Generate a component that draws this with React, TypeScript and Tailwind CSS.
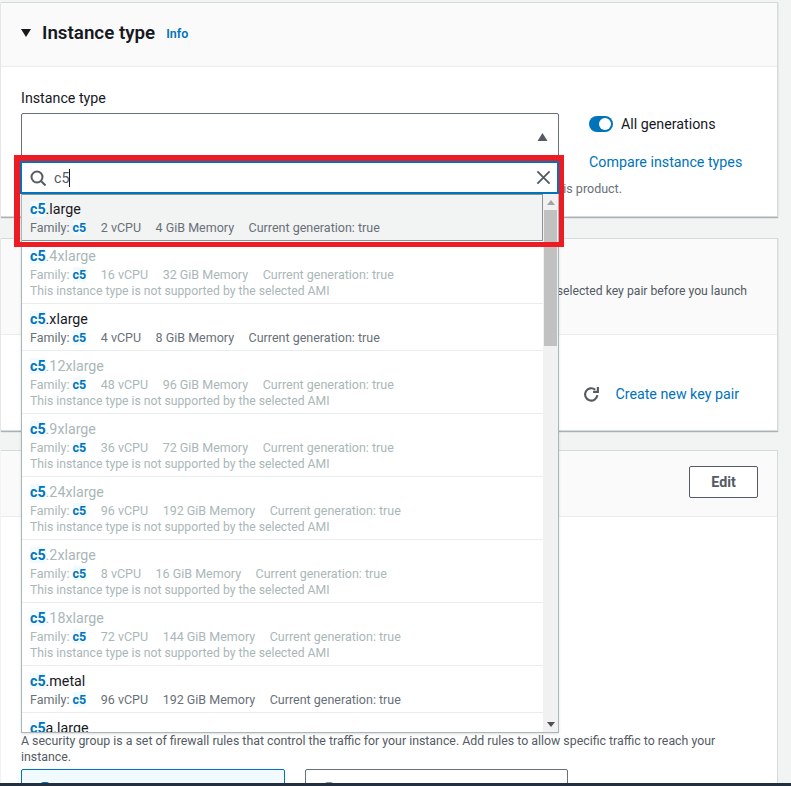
import React from "react";

type Row = {
  name: string;
  vcpu: string;
  memory: string;
  disabled?: boolean;
};

const rows: Row[] = [
  { name: ".large", vcpu: "2 vCPU", memory: "4 GiB Memory" },
  { name: ".4xlarge", vcpu: "16 vCPU", memory: "32 GiB Memory", disabled: true },
  { name: ".xlarge", vcpu: "4 vCPU", memory: "8 GiB Memory" },
  { name: ".12xlarge", vcpu: "48 vCPU", memory: "96 GiB Memory", disabled: true },
  { name: ".9xlarge", vcpu: "36 vCPU", memory: "72 GiB Memory", disabled: true },
  { name: ".24xlarge", vcpu: "96 vCPU", memory: "192 GiB Memory", disabled: true },
  { name: ".2xlarge", vcpu: "8 vCPU", memory: "16 GiB Memory", disabled: true },
  { name: ".18xlarge", vcpu: "72 vCPU", memory: "144 GiB Memory", disabled: true },
  { name: ".metal", vcpu: "96 vCPU", memory: "192 GiB Memory" },
];

const Match = () => (
  <span className="bg-[#f1faff] font-bold text-[#0073bb]">c5</span>
);

const OptionRow = ({ row, index }: { row: Row; index: number }) => (
  <div
    className={
      index === 0
        ? "border-y border-r border-[#879596] bg-[#f2f3f3] pl-2 pt-1 pb-1"
        : "border-b border-[#eaeded] pl-2 pt-[5px] pb-1"
    }
  >
    <div
      className={
        row.disabled
          ? "text-[14.25px] leading-5 text-[#aab7b8]"
          : "text-[14.25px] leading-5 text-[#16191f]"
      }
    >
      <Match />
      {row.name}
    </div>
    <div
      className={
        row.disabled
          ? "mt-px flex gap-[14.5px] text-[12.5px] leading-4 text-[#aab7b8]"
          : "mt-px flex gap-[14.5px] text-[12.5px] leading-4 text-[#687078]"
      }
    >
      <span>
        Family: <Match />
      </span>
      <span>{row.vcpu}</span>
      <span>{row.memory}</span>
      <span>Current generation: true</span>
    </div>
    {row.disabled && (
      <div className="text-[12.2px] leading-4 text-[#aab7b8]">
        This instance type is not supported by the selected AMI
      </div>
    )}
  </div>
);

const Dropdown = () => (
  <div className="absolute left-[21px] top-[194px] flex h-[539px] w-[538px] overflow-hidden border-b border-l border-r border-[#aab7b8] bg-white shadow-sm">
    <div className="min-w-0 flex-1 overflow-hidden">
      {rows.map((row, i) => (
        <OptionRow key={row.name} row={row} index={i} />
      ))}
      <div className="pl-2 pt-[5px] text-[14.25px] leading-5 text-[#16191f]">
        <Match />a.large
      </div>
    </div>
    <div className="flex w-[15px] shrink-0 flex-col items-center bg-[#f1f1f1] px-px">
      <svg viewBox="0 0 10 6" className="mt-[6px] h-[5px] w-2 fill-[#a3a3a3]">
        <path d="M5 0l5 6H0z" />
      </svg>
      <div className="mt-[5px] h-[136px] w-full bg-[#c1c1c1]" />
      <svg viewBox="0 0 10 6" className="mt-auto mb-[5px] h-[5px] w-2 fill-[#505050]">
        <path d="M5 6L0 0h10z" />
      </svg>
    </div>
  </div>
);

const SearchBox = () => (
  <div className="absolute left-[20px] top-[161px] flex h-[33px] w-[539px] items-center border-2 border-[#0073bb] bg-white">
    <svg viewBox="0 0 16 16" className="ml-2 h-4 w-4 fill-none stroke-[#545b64] stroke-2">
      <circle cx="7" cy="7" r="5.5" />
      <path d="M11 11l4.5 4.5" />
    </svg>
    <span className="ml-2 text-[14.25px] leading-5 text-[#545b64]">c5</span>
    <span className="h-[18px] w-px bg-[#16191f]" />
    <svg viewBox="0 0 16 16" className="ml-auto mr-[6px] h-[15px] w-[15px] fill-none stroke-[#545b64] stroke-2">
      <path d="M1.5 1.5l13 13M14.5 1.5l-13 13" />
    </svg>
  </div>
);

export default function App() {
  return (
    <div className="relative h-[786px] w-[791px] overflow-hidden bg-[#f2f3f3] font-['Roboto',sans-serif]">
      {/* instance type card */}
      <div className="ml-px mt-[2px] h-[215px] w-[777px] border-r border-b border-t border-[#d5dbdb] bg-white shadow-[0_1px_1px_rgba(0,28,36,0.3)]">
        <div className="flex h-[64px] items-center border-b border-[#eaeded] bg-[#fafafa] pb-1 pl-5">
          <svg viewBox="0 0 10 8" className="h-2 w-[10px] fill-[#16191f]">
            <path d="M0 0h10L5 8z" />
          </svg>
          <h2 className="ml-[11px] text-[18.75px] font-semibold leading-6 text-[#16191f]">Instance type</h2>
          <span className="ml-[11px] mt-[3px] text-[12.5px] font-semibold text-[#0073bb]">Info</span>
        </div>
        <div className="flex pl-5 pt-[21px]">
          <div className="w-[538px] shrink-0">
            <div className="text-[14.25px] leading-5 text-[#16191f]">Instance type</div>
            <div className="mt-[5px] flex h-[60px] items-start justify-end rounded-[2px] border border-[#687078] bg-white pr-[10px] pt-[19px]">
              <svg viewBox="0 0 10 8" className="h-2 w-[11px] fill-[#545b64]">
                <path d="M5 0l5 8H0z" />
              </svg>
            </div>
            <div className="mt-[6px] flex h-5 w-[601px] justify-end text-[12.5px] leading-5 text-[#687078]">
              <span className="shrink-0 whitespace-nowrap">
                All instance types may not be supported by this product.
              </span>
            </div>
          </div>
          <div className="ml-[30px] flex flex-col items-start pt-[26px]">
            <div className="flex items-center gap-2">
              <span className="flex h-4 w-6 items-center justify-end rounded-full bg-[#0073bb] pr-[2px]">
                <span className="h-3 w-3 rounded-full bg-white" />
              </span>
              <span className="text-[14.25px] leading-5 text-[#16191f]">All generations</span>
            </div>
            <span className="mt-[18px] text-[14.25px] leading-5 text-[#0073bb]">Compare instance types</span>
          </div>
        </div>
      </div>

      {/* key pair card */}
      <div className="ml-px mt-[21px] h-[193px] w-[777px] border-r border-b border-t border-[#d5dbdb] bg-white shadow-[0_1px_1px_rgba(0,28,36,0.3)]">
        <div className="flex h-[96px] items-start justify-end border-b border-[#eaeded] bg-[#fafafa] pr-[30px] pt-[44px] text-[12.2px] leading-4 text-[#545b64]">
          <span className="whitespace-nowrap">
            Ensure that you have access to the selected key pair before you launch
          </span>
        </div>
        <div className="flex items-center justify-end pr-[38px] pt-[49px]">
          <svg viewBox="0 0 16 16" className="h-[17px] w-[17px] fill-none stroke-[#545b64] stroke-2">
            <path d="M13.5 8.5a5.8 5.8 0 1 1-2-5" />
            <path d="M14 1v4.5H9.5" />
          </svg>
          <span className="ml-[15px] text-[14.25px] leading-5 text-[#0073bb]">Create new key pair</span>
        </div>
      </div>

      {/* network settings card */}
      <div className="ml-px mt-[19px] h-[340px] w-[777px] border-r border-t border-[#d5dbdb] bg-white">
        <div className="flex h-[66px] items-start justify-end border-b border-[#eaeded] bg-[#fafafa] pr-[19px] pt-[15px]">
          <span className="flex h-8 w-[69px] items-center justify-center rounded-[2px] border border-[#545b64] bg-white pt-[2px] text-[14.25px] font-bold text-[#545b64]">
            Edit
          </span>
        </div>
        <div className="pl-5 pr-12 pt-[216px] text-[12.35px] leading-4 text-[#545b64]">
          A security group is a set of firewall rules that control the traffic for your instance. Add rules to allow
          specific traffic to reach your instance.
        </div>
        <div className="mt-[4px] flex gap-5 pl-5">
          <div className="h-[30px] w-[264px] rounded-[2px] border border-[#0073bb] bg-[#f1faff] pl-[19px] pt-3">
            <div className="h-[2px] w-[8px] rounded-t-full bg-[#0073bb]" />
          </div>
          <div className="h-[30px] w-[263px] rounded-[2px] border border-[#687078] bg-white pl-[19px] pt-3">
            <div className="h-[2px] w-[8px] rounded-t-full bg-[#879596]" />
          </div>
        </div>
      </div>

      <Dropdown />
      <SearchBox />

      {/* red annotation */}
      <div className="pointer-events-none absolute left-[14px] top-[155px] h-[92px] w-[550px] border-b-[5px] border-l-[6px] border-r-[5px] border-t-[6px] border-[#ed1c24]" />

      <div className="absolute bottom-0 left-0 h-[3px] w-full bg-[#232f3e]" />
    </div>
  );
}
